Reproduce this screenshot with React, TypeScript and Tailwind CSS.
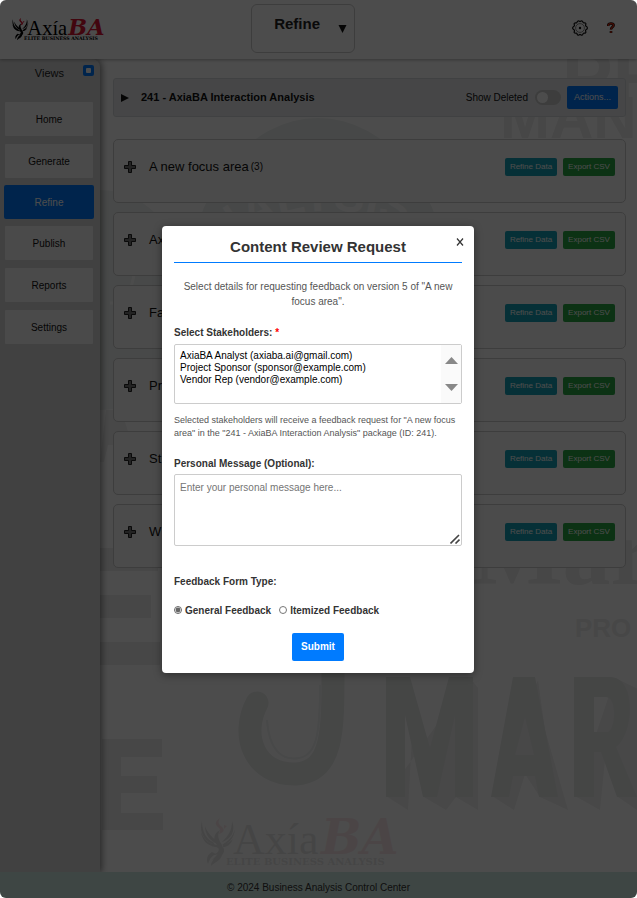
import { useState } from "react";

const views = ["Home", "Generate", "Refine", "Publish", "Reports", "Settings"];

const areas = [
  { name: "A new focus area", count: "(3)" },
  { name: "Ax", count: "" },
  { name: "Fa", count: "" },
  { name: "Pr", count: "" },
  { name: "St", count: "" },
  { name: "W", count: "" },
];

const stakeholders = [
  "AxiaBA Analyst (axiaba.ai@gmail.com)",
  "Project Sponsor (sponsor@example.com)",
  "Vendor Rep (vendor@example.com)",
];

function LogoArt() {
  return (
    <>
      <g fill="#000">
        <path d="M2 4C-1 14 3 24 15 28L13 25C6 22 2 14 2 4ZM5 9C5 18 10 23 17 27C17 22 8 19 5 9ZM1 15C2 23 7 29 16 30C21 31 19 36 13 38C20 38 25 33 22 28C18 22 17 18 20 13C13 17 13 23 17 28C9 27 4 23 1 15Z" />
        <path d="M32 4C36 14 31 22 22 25C28 19 32 14 32 4ZM35 12C34 22 28 27 22 28C28 24 33 20 35 12ZM33 22C30 29 26 30 23 30L23 27C27 27 30 25 33 22Z" />
        <path d="M23 30C27 36 20 41 12 43C20 36 19 33 23 30ZM22 37C22 43 15 45 11 49C11 43 16 41 22 37ZM12 35C7 38 6 42 8 47C10 41 12 39 16 37Z" />
      </g>
      <path d="M20 1C14 5 15 8 19 11C21 13 20 16 18 17C25 16 25 12 21 9C18 7 18 4 20 1ZM24 8L27 9L24 12Z" fill="#dc1432" />
      <text x="33" y="37" fontFamily="'Liberation Serif', serif" fontSize="44" fill="#000">Axía</text>
      <text x="121" y="37" fontFamily="'DejaVu Serif', serif" fontSize="48" fontWeight="700" fontStyle="italic" fill="#dc1432">BA</text>
      <text x="26" y="48" fontFamily="'DejaVu Serif', serif" fontSize="10" fontWeight="700" fill="#000">ELITE BUSINESS ANALYSIS</text>
    </>
  );
}

function Backdrop() {
  return (
    <svg
      className="absolute inset-0 h-full w-full"
      viewBox="0 0 637 898"
      preserveAspectRatio="xMidYMid slice"
      aria-hidden="true"
    >
      <defs>
        <path id="arc" d="M185 300A150 120 0 0 1 475 300" />
      </defs>
      <ellipse cx="318" cy="290" rx="130" ry="172" fill="#eef2f1" />
      <ellipse cx="100" cy="300" rx="90" ry="110" fill="#f1f4f3" />
      <path d="M128 300L146 226M110 303H240M455 205L510 310M500 250L560 290" stroke="#fff" strokeWidth="3" />
      <text fontFamily="'Liberation Sans', sans-serif" fontSize="46" fontWeight="700" fill="#fff">
        <textPath href="#arc" startOffset="30">ANALYSIS</textPath>
      </text>
      <path d="M100 462L106 410H121L138 462H128L124 445H108L104 462Z" fill="#f0f0f0" />
      <g fill="#ededed" fontWeight="700">
        <g fontFamily="'Liberation Sans', sans-serif">
          <text x="562" y="103" fontSize="76">PR</text>
          <text x="500" y="138" fontSize="60">MAN</text>
          <text x="575" y="637" fontSize="26">PRO</text>
        </g>
        <text x="472" y="584" fontFamily="'Liberation Serif', serif" fontSize="96">Mar</text>
        <path d="M100 548H158V571H100ZM100 595H151V618H100ZM100 642H160V665H100Z" />
        <path d="M102 739H162V757H121V776H157V793H121V813H163V830H102Z" />
      </g>
      <path d="M257 703C240 735 254 775 296 774C334 771 333 730 333 665" fill="none" stroke="#ebedec" strokeWidth="23" strokeLinecap="round" />
      <path d="M267 720C269 750 282 761 299 758C317 755 320 733 320 685" fill="none" stroke="#f2f3f3" strokeWidth="2" />
      <g fill="#f1f1f1">
        <path d="M386 796L408 810L414 700L426 740L424 797L446 810L456 797L478 810L478 688L470 678Z" />
        <path d="M492 796L514 810L525 774L540 797L568 810L545 730L538 680Z" />
        <path d="M575 796L600 810L606 750L618 797L640 812V690L615 678Z" />
      </g>
      <g fill="#e7e9e8">
        <path d="M386 677H410L430 748L449 677H473V797H455V715L437 797H423L405 715V797H386Z" />
        <path fillRule="evenodd" d="M513 677H535L558 797H539L535 776H513L509 797H491ZM525 717L515 755H534Z" />
        <path fillRule="evenodd" d="M574 677H610C637 677 634 734 616 747L637 797H617L601 752H594V797H574ZM594 697V732H608C616 729 617 697 606 697Z" />
      </g>
      <svg x="200" y="817" width="204" height="50" viewBox="0 0 204 50" opacity=".09">
        <LogoArt />
      </svg>
    </svg>
  );
}

function PlusIcon() {
  return (
    <svg className="h-3 w-3 shrink-0" viewBox="0 0 12 12" aria-hidden="true">
      <path d="M4.5 .5H7.5V4.5H11.5V7.5H7.5V11.5H4.5V7.5H.5V4.5H4.5Z" fill="#777" stroke="#222" />
    </svg>
  );
}

function GearIcon() {
  return (
    <svg className="h-4 w-4" viewBox="0 0 16 16" fill="none" stroke="#111" strokeWidth="1.2" aria-hidden="true">
      <path d="M6 1C7 .4 7.5 1.6 8 1.6S9 .4 10 1S11 2.6 11.5 2.8S13.4 2.4 13.8 3.4S13.2 5.2 13.6 5.8S15.4 6.4 15.4 8S14 9.4 13.6 10.2S14.4 12 13.6 12.8S11.8 12.8 11.3 13.3S11 15 10 15.2S8.6 14.4 8 14.4S7 15.5 6 15.2S5.2 13.6 4.7 13.3S2.8 13.6 2.3 12.8S2.8 11 2.4 10.2S.6 9.4 .6 8S2 6.6 2.4 5.8S1.6 4 2.3 3.3S4.2 3.2 4.7 2.8S5 1.4 6 1Z" />
      <circle cx="8" cy="8" r="4.4" stroke="#888" strokeWidth="1" />
      <circle cx="8" cy="8" r="1.2" fill="#111" stroke="none" />
    </svg>
  );
}

function ReviewDialog() {
  const [formType, setFormType] = useState("general");
  return (
    <div className="absolute inset-0 z-20 flex items-center justify-center bg-black/70 pr-px">
      <form
        role="dialog"
        aria-labelledby="dialog-title"
        className="relative w-[312px] rounded bg-white p-3 text-[10px] leading-[15px] text-[#333] shadow-[0_2px_8px_rgba(0,0,0,0.4)]"
        onSubmit={(e) => e.preventDefault()}
      >
        <button type="button" aria-label="Close" className="absolute top-2 right-2 flex h-4 w-3 items-center justify-center">
          <svg className="h-2 w-2" viewBox="0 0 8 8" stroke="#333" strokeWidth="1.2" aria-hidden="true">
            <path d="M1 .5L7 7.5M7 .5L1 7.5" />
          </svg>
        </button>
        <h2 id="dialog-title" className="pb-1.5 text-center text-[15px] leading-[18px] font-bold">
          Content Review Request
        </h2>
        <hr className="h-px border-0 bg-[#007bff]" />
        <p className="mt-4 px-2 text-center text-[#555]">
          Select details for requesting feedback on version 5 of "A new focus area".
        </p>
        <label htmlFor="stakeholders" className="mt-4 block font-bold">
          Select Stakeholders: <span className="text-[#ff0000]">*</span>
        </label>
        <div className="relative mt-1">
          <select
            id="stakeholders"
            multiple
            className="block h-[60px] w-full overflow-hidden rounded-xs border border-[#ccc] bg-white px-[5px] py-[5px] leading-3 text-black"
          >
            {stakeholders.map((s) => (
              <option key={s} className="h-3 min-h-0 p-0 leading-3">
                {s}
              </option>
            ))}
          </select>
          <div className="pointer-events-none absolute inset-y-px right-px flex w-5 flex-col items-center justify-center gap-5 bg-[#fafafa]" aria-hidden="true">
            <svg className="h-[7px] w-[13px]" viewBox="0 0 13 7" fill="#888"><path d="M6.5 0L13 7H0Z" /></svg>
            <svg className="h-[7px] w-[13px]" viewBox="0 0 13 7" fill="#888"><path d="M0 0H13L6.5 7Z" /></svg>
          </div>
        </div>
        <p className="mt-2.5 text-[9px] leading-[13px] text-[#555]">
          Selected stakeholders will receive a feedback request for "A new focus area" in the "241 - AxiaBA Interaction Analysis" package (ID: 241).
        </p>
        <label htmlFor="message" className="mt-4 block font-bold">
          Personal Message (Optional):
        </label>
        <div className="relative mt-[3px]">
          <textarea
            id="message"
            placeholder="Enter your personal message here..."
            className="block h-[72px] w-full resize-none rounded-xs border border-[#ccc] px-[5px] py-[5px] placeholder:text-[#757575]"
          />
          <svg className="pointer-events-none absolute right-0.5 bottom-0.5 h-2.5 w-2.5" viewBox="0 0 10 10" stroke="#444" strokeWidth="1.6" aria-hidden="true">
            <path d="M.5 9.5L9 1M5.5 9.5L9.5 5.5" />
          </svg>
        </div>
        <fieldset className="mt-7">
          <legend className="font-bold">Feedback Form Type:</legend>
          <div className="mt-3.5 flex items-center gap-2 font-bold">
            <label className="flex items-center gap-[3px]">
              <input type="radio" name="type" className="h-2 w-2 accent-[#666]" checked={formType === "general"} onChange={() => setFormType("general")} />
              General Feedback
            </label>
            <label className="flex items-center gap-[3px]">
              <input type="radio" name="type" className="h-2 w-2 accent-[#666]" checked={formType === "itemized"} onChange={() => setFormType("itemized")} />
              Itemized Feedback
            </label>
          </div>
        </fieldset>
        <button type="submit" className="mx-auto mt-[15px] block h-7 w-[52px] rounded-xs bg-[#007bff] font-bold text-white">
          Submit
        </button>
      </form>
    </div>
  );
}

export default function App() {
  return (
    <div className="relative flex min-h-screen flex-col overflow-hidden rounded-md bg-white font-['Liberation_Sans',Arial,sans-serif] text-[#111]">
      <Backdrop />
      <header className="relative z-10 flex h-[59px] items-start bg-white pr-5 pl-3 shadow-[0_1px_3px_rgba(0,0,0,0.3)]">
        <div className="w-[239px]">
          <svg className="mt-[17px] h-6 w-[95px]" viewBox="0 0 204 50" role="img" aria-label="AxiaBA Elite Business Analysis">
            <LogoArt />
          </svg>
        </div>
        <button className="mt-1 flex h-[49px] w-[104px] justify-end gap-[18px] rounded-md border border-[#ccc] pr-[7px] text-[#222]">
          <span className="mt-2.5 text-[15px] leading-[18px] font-bold">Refine</span>
          <svg className="mt-5 h-2 w-[9px]" viewBox="0 0 9 8" aria-hidden="true"><path d="M.5 0H8.5L4.5 8Z" fill="#111" /></svg>
        </button>
        <div className="mt-5 flex flex-1 items-center justify-end gap-[17px]">
          <button aria-label="Settings"><GearIcon /></button>
          <button aria-label="Help" className="flex w-3 justify-center">
            <svg className="h-3 w-2" viewBox="0 0 8 12" aria-hidden="true">
              <path d="M1.3 4V3C1.3 1 6.6 1 6.6 3.2C6.6 5 4 5 4 7.5M4 9V11" fill="none" stroke="#111" strokeWidth="2.6" />
              <path d="M1.3 4V3C1.3 1 6.6 1 6.6 3.2C6.6 5 4 5 4 7.5M4 9V11" fill="none" stroke="#d62a10" strokeWidth="1.4" />
            </svg>
          </button>
        </div>
      </header>

      <div className="relative flex flex-1">
        <nav aria-label="Views" className="w-[100px] shrink-0 rounded-tr-lg bg-[#dadada] px-[5px] shadow-[2px_0_6px_rgba(0,0,0,0.45)]">
          <div className="flex h-[43px] items-start justify-end gap-[19px] pt-1.5 pr-px">
            <h2 className="mt-px text-[11px] leading-[14px] text-[#222]">Views</h2>
            <button aria-label="Collapse" className="flex h-[11px] w-[11px] items-center justify-center rounded-xs bg-[#007bff]">
              <span className="h-[5px] w-[5px] rounded-[1px] bg-white" />
            </button>
          </div>
          <div className="flex flex-col gap-2 pr-0.5 text-[10px]">
            {views.map((v) => (
              <button
                key={v}
                className={
                  v === "Refine"
                    ? "-mx-px -my-px h-[34px] rounded-xs bg-[#007bff] text-white"
                    : "h-[34px] rounded-[1px] bg-[#f8f8f8]"
                }
              >
                {v}
              </button>
            ))}
          </div>
        </nav>

        <main className="min-w-0 flex-1 pt-[19px] pr-[11px] pl-[13px]">
          <div className="flex h-[39px] items-center rounded-[3px] border border-[#d8dbde] bg-[#e9ecef] pr-[7px] pl-[7px]">
            <button aria-label="Expand package" className="mr-3">
              <svg className="h-2 w-2" viewBox="0 0 8 8" aria-hidden="true"><path d="M0 0L8 4L0 8Z" fill="#111" /></svg>
            </button>
            <h1 className="flex-1 text-[11px] font-bold">241 - AxiaBA Interaction Analysis</h1>
            <label className="flex items-center gap-[7px] text-[10px]">
              Show Deleted
              <input type="checkbox" role="switch" className="peer sr-only" />
              <span className="flex h-[15px] w-[26px] items-center rounded-full bg-[#ccc] px-0.5">
                <span className="h-[11px] w-[11px] rounded-full bg-white" />
              </span>
            </label>
            <button className="ml-1.5 h-[23px] w-[51px] rounded-xs bg-[#007bff] text-[9px] text-white">Actions...</button>
          </div>
          <ul className="mt-[22px] flex flex-col gap-[9px]">
            {areas.map((a) => (
              <li key={a.name} className="flex h-16 items-start rounded-[5px] border border-[#ccc] bg-[#fbfbfb] pt-[17px] pr-2.5 pl-2.5">
                <button aria-label={"Expand " + a.name} className="mt-1 mr-[13px]">
                  <PlusIcon />
                </button>
                <h3 className="flex flex-1 items-center gap-0.5 text-[13px] leading-5">
                  {a.name} <small className="text-[10px]">{a.count}</small>
                </h3>
                <div className="mt-px flex gap-1.5 text-[8px] text-white">
                  <button className="h-[18px] w-[52px] rounded-xs bg-[#17a2b8]">Refine Data</button>
                  <button className="h-[18px] w-[52px] rounded-xs bg-[#28a745]">Export CSV</button>
                </div>
              </li>
            ))}
          </ul>
        </main>
      </div>

      <footer className="relative flex h-[26px] items-center justify-center bg-[#d0ebe3] pt-1 text-[10px] text-[#333]">
        © 2024 Business Analysis Control Center
      </footer>
      <ReviewDialog />
    </div>
  );
}
